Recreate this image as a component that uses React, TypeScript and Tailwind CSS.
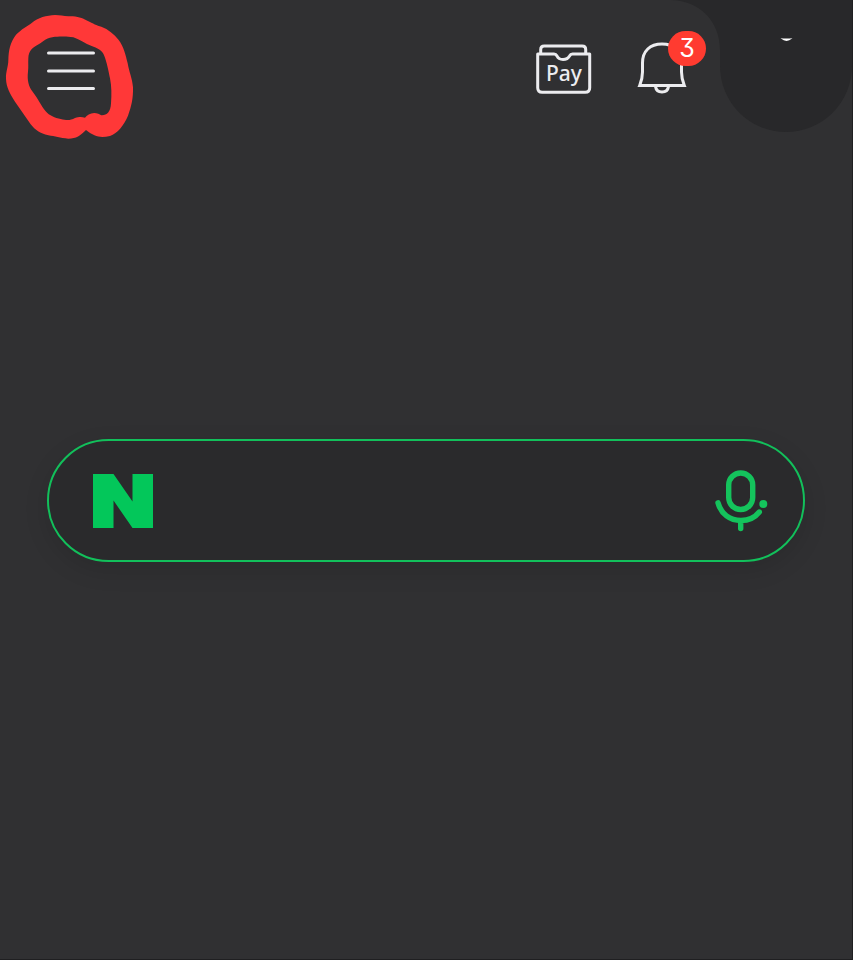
function MenuIcon() {
  return (
    <svg viewBox="0 0 48 48" className="w-12 h-12" fill="none" stroke="#ececef" strokeWidth="3" strokeLinecap="round">
      <path d="M1.5 6H46.5M1.5 24H46.5M1.5 41.5H46.5" />
    </svg>
  );
}

function Scribble() {
  return (
    <svg viewBox="0 0 450 450" className="absolute top-0 left-0 w-[150px] h-[150px] pointer-events-none" fill="#ff3838" aria-hidden="true">
      <path
        fillRule="evenodd"
        d="M165 45C180 45 190 48 205 49C230 48 245 53 262 62C280 71 290 76 304 80C325 88 342 102 356 120C371 140 377 165 383 190C387 215 397 235 399 262C400 295 394 320 384 347C372 375 353 400 330 408C300 414 285 411 258 390C240 407 230 416 205 416C180 414 165 409 145 406C120 400 106 391 92 373L45 305C30 282 19 262 18 237C17 215 25 200 25 180C26 150 30 128 48 104C66 86 80 80 96 68C113 53 140 46 165 45Z
        M165 110C142 112 130 123 116 133C98 143 86 152 85 175C84 190 86 200 84 215C81 240 86 260 98 275C115 297 122 315 137 334C148 347 165 354 182 357C200 361 210 362 225 354C238 350 246 351 255 353C262 343 277 335 295 341L304 346C320 347 332 336 333 310C335 285 335 260 330 235C326 215 320 185 313 168C308 150 290 144 275 138C255 132 240 118 220 112C198 108 185 110 165 110Z"
      />
    </svg>
  );
}

function PayIcon() {
  return (
    <svg viewBox="0 0 57 52" className="w-[57px] h-[52px]" fill="none" stroke="#ececef" strokeWidth="3" strokeLinejoin="round">
      <path d="M5.7 11V6.5Q5.7 3 9.2 3H47.2Q50.7 3 50.7 6.5V11" />
      <path d="M2.7 11H19Q21 11 22 13C24 17.6 32 17.6 34.5 13Q35.5 11 37.5 11H54.7V44.8Q54.7 49.3 50.2 49.3H7.2Q2.7 49.3 2.7 44.8Z" />
      <text x="29" y="38" textAnchor="middle" fill="#ececef" stroke="none" className="font-['Noto_Sans',sans-serif] text-[21px] font-medium">
        Pay
      </text>
    </svg>
  );
}

function BellIcon() {
  return (
    <svg viewBox="0 0 50 54" className="w-[50px] h-[54px]" fill="none" stroke="#ececef" strokeWidth="3">
      <path d="M2.7 44.5C4.5 40 5.5 36 5.5 31V22C5.5 10 13 3 25 3S44.5 10 44.5 22V31C44.5 36 45.5 40 47.3 44.5Z" />
      <path d="M18.5 45.5C19 49 21 51 25 51S31 49 31.5 45.5" />
    </svg>
  );
}

function NaverLogo() {
  return (
    <svg viewBox="0 0 60 54" className="w-[60px] h-[54px]" fill="#03c75a" role="img" aria-label="Naver">
      <path d="M0 0H20.5L39.5 27.5V0H60V54H39.5L20.5 26.5V54H0Z" />
    </svg>
  );
}

function MicIcon() {
  return (
    <svg viewBox="0 0 56 64" className="w-14 h-16" fill="none" stroke="#14c35c" strokeWidth="5.4" strokeLinecap="round">
      <rect x="14.7" y="4" width="24" height="36.5" rx="12" />
      <path d="M4 33.8C7 45 16 51.5 27 51.5C34.5 51.5 41 48.5 45.3 43M26.7 51.5V59.5" />
      <circle cx="49.3" cy="35" r="4" fill="#14c35c" stroke="none" />
    </svg>
  );
}

function CornerPanel() {
  return (
    <div className="relative w-[132px] h-[132px] rounded-b-full bg-[#28282a]">
      <svg viewBox="0 0 50 50" className="absolute top-0 right-full w-[50px] h-[50px]" fill="#28282a" aria-hidden="true">
        <path d="M0 0H50V50C50 21 29 0 0 0Z" />
      </svg>
      <svg viewBox="0 0 14 4" className="mx-auto mt-[38px] w-[14px] h-1" fill="#fff" aria-hidden="true">
        <path d="M1.500 .3Q7.500 .9 13.500 .3Q10 2.900 7.500 2.900T1.500 .3Z" />
      </svg>
    </div>
  );
}

export default function App() {
  return (
    <div className="min-h-screen bg-[#303032] border-r border-b border-[#1f1f21] overflow-hidden">
      <header className="relative flex items-start justify-between pl-[47px]">
        <button type="button" aria-label="Menu" className="mt-[47px]">
          <MenuIcon />
        </button>
        <Scribble />

        <div className="flex items-start">
          <button type="button" aria-label="Pay" className="mt-[43px] mr-[45px]">
            <PayIcon />
          </button>
          <button type="button" aria-label="Notifications, 3 new" className="relative z-10 mt-[41px] mr-[33px]">
            <BellIcon />
            <span className="absolute -top-[10px] left-[31px] flex items-center justify-center w-[38px] h-[35px] rounded-full bg-[#ff3b30] text-white text-[25px] leading-none font-['Inter',sans-serif] [font-feature-settings:'cv09']">
              3
            </span>
          </button>
          <CornerPanel />
        </div>
      </header>

      <main className="px-[47px] pt-[307px]">
        <form
          role="search"
          onSubmit={(e) => e.preventDefault()}
          className="flex items-center h-[123px] pl-11 pr-[33px] rounded-full border-2 border-[#12c05b] bg-[#2a2a2c] shadow-[0_8px_24px_rgba(0,0,0,0.12)]"
        >
          <label htmlFor="query">
            <NaverLogo />
          </label>
          <input id="query" type="text" className="flex-1 min-w-0 h-full px-6 bg-transparent text-3xl text-white outline-none font-['Noto_Sans',sans-serif]" />
          <button type="button" aria-label="Voice search">
            <MicIcon />
          </button>
        </form>
      </main>
    </div>
  );
}
